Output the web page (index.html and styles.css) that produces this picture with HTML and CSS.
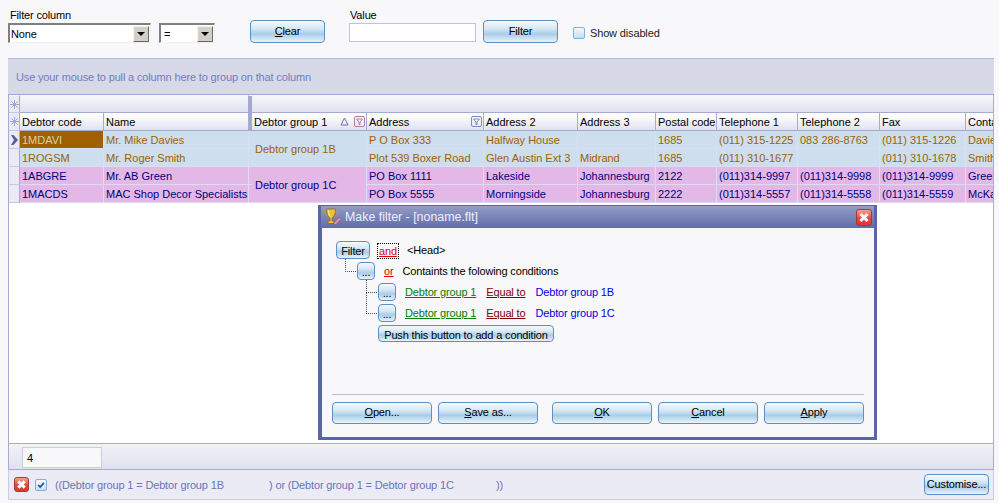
FILE: index.html
```html
<!DOCTYPE html>
<html lang="en">
<head>
    <meta charset="UTF-8">
    <meta name="viewport" content="width=device-width, initial-scale=1.0">
    <title>Debtors</title>
    <link rel="stylesheet" href="styles.css">
</head>
<body>
<div class="page">
    <div class="filter-bar">
        <div class="field field-column">
            <label>Filter column</label>
            <div class="combo combo-column"><span>None</span><i class="combo-arrow"></i></div>
        </div>
        <div class="combo combo-op"><span>=</span><i class="combo-arrow"></i></div>
        <button class="btn btn-clear"><u>C</u>lear</button>
        <div class="field field-value">
            <label>Value</label>
            <div class="value-input"></div>
        </div>
        <button class="btn btn-filter">Filter</button>
        <label class="check-label"><i class="check-box"></i>Show disabled</label>
    </div>

    <div class="group-panel">Use your mouse to pull a column here to group on that column</div>

    <div class="grid-wrap">
        <table class="grid">
            <colgroup>
                <col class="c-ind"><col class="c-code"><col class="c-name"><col class="c-sep">
                <col class="c-group"><col class="c-addr"><col class="c-addr2"><col class="c-addr3">
                <col class="c-postal"><col class="c-tel1"><col class="c-tel2"><col class="c-fax"><col class="c-contact">
            </colgroup>
            <thead>
                <tr class="band-row">
                    <th class="ind"><svg class="star" viewBox="0 0 9 9"><path d="M4.5 0v9M0 4.5h9M1.3 1.3l6.4 6.4M7.7 1.3L1.3 7.7"/></svg></th>
                    <th colspan="2"></th>
                    <th class="sep" rowspan="2"></th>
                    <th colspan="9"></th>
                </tr>
                <tr class="head-row">
                    <th class="ind"><svg class="star" viewBox="0 0 9 9"><path d="M4.5 0v9M0 4.5h9M1.3 1.3l6.4 6.4M7.7 1.3L1.3 7.7"/></svg></th>
                    <th>Debtor code</th>
                    <th>Name</th>
                    <th>
                        <div class="th-inner">Debtor group 1
                            <span class="th-icons">
                                <svg class="sort-icon" viewBox="0 0 9 9"><path d="M4.5 1L8 8H1z"/></svg>
                                <svg class="funnel funnel-on" viewBox="0 0 11 11"><rect x=".5" y=".5" width="10" height="10" rx="1.5"/><path d="M2.5 3h6L6 6v2.5H5V6z"/></svg>
                            </span>
                        </div>
                    </th>
                    <th>
                        <div class="th-inner">Address
                            <span class="th-icons">
                                <svg class="funnel" viewBox="0 0 11 11"><rect x=".5" y=".5" width="10" height="10" rx="1.5"/><path d="M2.5 3h6L6 6v2.5H5V6z"/></svg>
                            </span>
                        </div>
                    </th>
                    <th>Address 2</th>
                    <th>Address 3</th>
                    <th>Postal code</th>
                    <th>Telephone 1</th>
                    <th>Telephone 2</th>
                    <th>Fax</th>
                    <th>Contact</th>
                </tr>
            </thead>
            <tbody>
                <tr class="row-b">
                    <td class="ind"><svg class="cursor" viewBox="0 0 7 10"><path d="M0 0h2.500L7 5l-4.500 5H0l3-5z"/></svg></td>
                    <td class="selected">1MDAVI</td>
                    <td>Mr. Mike Davies</td>
                    <td class="sep"></td>
                    <td rowspan="2" class="group-cell">Debtor group 1B</td>
                    <td>P O Box 333</td>
                    <td>Halfway House</td>
                    <td></td>
                    <td>1685</td>
                    <td>(011) 315-1225</td>
                    <td>083 286-8763</td>
                    <td>(011) 315-1226</td>
                    <td>Davies</td>
                </tr>
                <tr class="row-b">
                    <td class="ind"></td>
                    <td>1ROGSM</td>
                    <td>Mr. Roger Smith</td>
                    <td class="sep"></td>
                    <td>Plot 539 Boxer Road</td>
                    <td>Glen Austin Ext 3</td>
                    <td>Midrand</td>
                    <td>1685</td>
                    <td>(011) 310-1677</td>
                    <td></td>
                    <td>(011) 310-1678</td>
                    <td>Smith</td>
                </tr>
                <tr class="row-c">
                    <td class="ind"></td>
                    <td>1ABGRE</td>
                    <td>Mr. AB Green</td>
                    <td class="sep"></td>
                    <td rowspan="2" class="group-cell">Debtor group 1C</td>
                    <td>PO Box 1111</td>
                    <td>Lakeside</td>
                    <td>Johannesburg</td>
                    <td>2122</td>
                    <td>(011)314-9997</td>
                    <td>(011)314-9998</td>
                    <td>(011)314-9999</td>
                    <td>Green</td>
                </tr>
                <tr class="row-c">
                    <td class="ind"></td>
                    <td>1MACDS</td>
                    <td>MAC Shop Decor Specialists</td>
                    <td class="sep"></td>
                    <td>PO Box 5555</td>
                    <td>Morningside</td>
                    <td>Johannesburg</td>
                    <td>2222</td>
                    <td>(011)314-5557</td>
                    <td>(011)314-5558</td>
                    <td>(011)314-5559</td>
                    <td>McKay</td>
                </tr>
            </tbody>
        </table>
    </div>

    <div class="summary-bar"><div class="summary-cell">4</div></div>

    <div class="filter-summary">
        <i class="close-btn close-small"></i>
        <i class="check-on"><svg viewBox="0 0 12 12"><path d="M2.500 6l2.500 2.500L9.500 3.500"/></svg></i>
        <span class="filter-text filter-a">((Debtor group 1 = Debtor group 1B</span>
        <span class="filter-text filter-b">) or (Debtor group 1 = Debtor group 1C</span>
        <span class="filter-text filter-c">))</span>
        <button class="btn btn-customise">Customise...</button>
    </div>

    <div class="dialog">
        <div class="dialog-title">
            <svg class="trophy" viewBox="0 0 18 18">
                <path class="trophy-handle" d="M4 3H1.500c0 3 1 4.500 3 5M12 3h2.500c0 3-1 4.500-3 5"/>
                <path class="trophy-cup" d="M3.500 1h9c0 5-1.500 8-3.500 9v3h2v2.500H5V13h2v-3C5 9 3.500 6 3.500 1z"/>
                <path class="trophy-shine" d="M5.500 2.500c0 2.500.5 4.500 1.500 6"/>
                <path class="trophy-pencil" d="M10.500 17l.6-2.600 5-5 2 2-5 5z"/>
            </svg>
            <span>Make filter - [noname.flt]</span>
            <i class="close-btn"></i>
        </div>
        <div class="dialog-body">
            <div class="tree">
                <div class="tree-row row-head">
                    <button class="btn btn-tree btn-root">Filter</button>
                    <a class="op-and">and</a>
                    <span>&lt;Head&gt;</span>
                </div>
                <div class="tree-row row-or">
                    <button class="btn btn-tree btn-dots">...</button>
                    <a class="op-or">or</a>
                    <span>Containts the folowing conditions</span>
                </div>
                <div class="tree-row row-cond">
                    <button class="btn btn-tree btn-dots">...</button>
                    <a class="cond-field">Debtor group 1</a>
                    <a class="cond-op">Equal to</a>
                    <a class="cond-value">Debtor group 1B</a>
                </div>
                <div class="tree-row row-cond row-cond-tall">
                    <button class="btn btn-tree btn-dots">...</button>
                    <a class="cond-field">Debtor group 1</a>
                    <a class="cond-op">Equal to</a>
                    <a class="cond-value">Debtor group 1C</a>
                </div>
                <div class="tree-row row-add">
                    <button class="btn btn-tree btn-add">Push this button to add a condition</button>
                </div>
            </div>
            <div class="dialog-buttons">
                <button class="btn btn-dlg"><u>O</u>pen...</button>
                <button class="btn btn-dlg"><u>S</u>ave as...</button>
                <button class="btn btn-dlg btn-ok"><u>O</u>K</button>
                <button class="btn btn-dlg"><u>C</u>ancel</button>
                <button class="btn btn-dlg"><u>A</u>pply</button>
            </div>
        </div>
    </div>
</div>
</body>
</html>
```

FILE: styles.css
```css
* {
    box-sizing: border-box;
}
body {
    margin: 0;
    background-color: #f8f8fb;
    font-family: "Liberation Sans", Arial, sans-serif;
    font-size: 11px;
    letter-spacing: -.15px;
    color: #000;
}
.page {
    position: relative;
    width: 999px;
    height: 503px;
    overflow: hidden;
    display: flex;
    flex-direction: column;
    padding: 0 5px 3px 8px;
}

/* buttons */
.btn {
    display: block;
    padding: 0 0 2px;
    font: inherit;
    letter-spacing: inherit;
    white-space: nowrap;
    color: #000;
    border: 1px solid #5c8fc4;
    border-radius: 4px;
    background: linear-gradient(#f4f9fd 0%, #d9e9f5 35%, #a9cde8 62%, #cfe4f3 85%, #eaf4fb 100%);
    text-align: center;
}

/* top filter row */
.filter-bar {
    height: 58px;
    display: flex;
    align-items: flex-start;
}
.field label {
    display: block;
    height: 13px;
    line-height: 13px;
}
.field-column {
    width: 143px;
    padding-top: 9px;
}
.field-column label {
    margin-left: 2px;
}
.combo {
    height: 20px;
    display: flex;
    align-items: center;
    justify-content: space-between;
    padding: 0 1px 0 1px;
    background-color: #fff;
    border: 2px solid;
    border-color: #808080 #f0f0f0 #f0f0f0 #808080;
    border-width: 2px 1px 1px 2px;
}
.field-column .combo {
    margin-top: 1px;
}
.combo-op {
    width: 56px;
    margin: 23px 35px 0 8px;
    padding-left: 3px;
}
.combo-arrow {
    width: 16px;
    height: 16px;
    background: #d4d0c8;
    border: 1px solid;
    border-color: #f4f4f4 #666 #666 #f4f4f4;
    position: relative;
}
.combo-arrow::after {
    content: "";
    position: absolute;
    left: 3px;
    top: 5px;
    border: 4px solid transparent;
    border-top: 4px solid #000;
    border-bottom: 0;
}
.btn-clear, .btn-filter {
    width: 75px;
    height: 23px;
    margin-top: 20px;
}
.field-value {
    width: 127px;
    margin-left: 24px;
    margin-right: 7px;
    padding-top: 9px;
}
.field-value label {
    margin-left: 1px;
}
.value-input {
    height: 19px;
    margin-top: 1px;
    background-color: #fff;
    border: 1px solid #bfc4da;
}
.check-label {
    display: flex;
    align-items: center;
    margin: 26px 0 0 15px;
    height: 14px;
    color: #222;
}
.check-box {
    width: 12px;
    height: 12px;
    margin-right: 5px;
    border: 1px solid #7fb0dc;
    border-radius: 2px;
    background: linear-gradient(#f2f8fd, #c4dff3);
}

/* group panel */
.group-panel {
    height: 37px;
    line-height: 36px;
    padding-left: 8px;
    background-color: #d7d9e8;
    border-top: 1px solid #b3b9dc;
    border-bottom: 1px solid #9da5d3;
    color: #727cbd;
}

/* grid */
.grid-wrap {
    height: 348px;
    overflow: hidden;
    background-color: #fff;
    border-left: 1px solid #a5abd3;
    border-right: 1px solid #a5abd3;
}
.grid {
    table-layout: fixed;
    width: 1014px;
    border-collapse: separate;
    border-spacing: 0;
    letter-spacing: 0;
}
.c-ind { width: 11px; }
.c-code { width: 84px; }
.c-name { width: 145px; }
.c-sep { width: 3px; }
.c-group { width: 115px; }
.c-addr { width: 117px; }
.c-addr2 { width: 94px; }
.c-addr3 { width: 78px; }
.c-postal { width: 61px; }
.c-tel1 { width: 81px; }
.c-tel2 { width: 82px; }
.c-fax { width: 86px; }
.c-contact { width: 57px; }
.grid th, .grid td {
    padding: 0 0 0 2px;
    overflow: hidden;
    white-space: nowrap;
    font-weight: normal;
    text-align: left;
}
.band-row th {
    height: 18px;
    background: linear-gradient(#f6f6fb, #dfe1ee);
    border-top: 1px solid #f8f8fb;
    border-right: 1px solid #a5abd3;
    border-bottom: 1px solid #a5abd3;
}
.head-row th {
    height: 18px;
    background: linear-gradient(#fdfdfe 20%, #dfe1ee);
    border-right: 1px solid #a5abd3;
    border-bottom: 1px solid #a5abd3;
}
.grid .ind {
    padding: 0;
    background: #e9eaf3;
    border-right: 1px solid #a5abd3;
    border-bottom: 1px solid #c6cae3;
    text-align: center;
    vertical-align: middle;
}
.grid .sep {
    padding: 0;
    border-right: 0;
}
thead .sep {
    background: #a3a9cc;
}
.grid td {
    height: 18px;
    border-right: 1px solid #dcdcf4;
    border-bottom: 1px solid #dcdcf4;
}
.grid td.sep {
    border-right: 0;
}
.row-b td {
    background-color: #cddfee;
    color: #a06000;
}
.row-c td {
    background-color: #e4b8e6;
    color: #000080;
}
.grid td.selected {
    background-color: #a06000;
    color: #d9d0a8;
}
.grid tbody .ind {
    background: #e9eaf3;
}
.grid td.group-cell {
    padding-left: 3px;
}
.star {
    display: block;
    width: 9px;
    height: 9px;
    margin: 0 auto;
    fill: none;
    stroke: #a0a8d8;
    stroke-width: 1;
}
.cursor {
    display: block;
    width: 7px;
    height: 10px;
    margin: 0 auto;
    fill: #565f9e;
}
.th-inner {
    display: flex;
    justify-content: space-between;
    align-items: center;
}
.th-icons {
    display: flex;
    align-items: center;
    gap: 5px;
    margin-right: 1px;
}
.sort-icon {
    width: 9px;
    height: 9px;
    fill: none;
    stroke: #6a73b0;
}
.funnel {
    display: block;
    width: 11px;
    height: 11px;
    fill: none;
    stroke: #7f88c4;
}
.funnel-on {
    stroke: #b57ba6;
}

/* bottom bars */
.summary-bar {
    height: 27px;
    padding: 3px 0 0 13px;
    background: linear-gradient(#f2f3f8, #dfe1ee);
    border: 1px solid #a5abd3;
}
.summary-cell {
    width: 80px;
    height: 21px;
    line-height: 20px;
    padding-left: 4px;
    background-color: #f8f8fb;
    border: 1px solid #c9cde4;
}
.filter-summary {
    height: 30px;
    display: flex;
    align-items: center;
    padding: 0 4px 0 5px;
    background-color: #ebebf5;
    border: 1px solid #c9cde4;
    border-top: 0;
}
.close-btn {
    display: block;
    width: 16px;
    height: 17px;
    position: relative;
    border: 1px solid #a33a33;
    border-radius: 3px;
    background: linear-gradient(#f4a090, #e9473c 55%, #d9382f);
}
.close-btn::before, .close-btn::after {
    content: "";
    position: absolute;
    left: 2px;
    top: 6px;
    width: 10px;
    height: 3px;
    background: #fff;
    transform: rotate(45deg);
}
.close-btn::after {
    transform: rotate(-45deg);
}
.close-small {
    width: 15px;
    height: 15px;
}
.close-small::before, .close-small::after {
    left: 2px;
    top: 5px;
    width: 9px;
}
.check-on {
    display: block;
    width: 12px;
    height: 12px;
    margin-left: 6px;
    background: linear-gradient(#f6fafd, #c8e0f3);
    border: 1px solid #7fb0dc;
    border-radius: 2px;
}
.check-on svg {
    display: block;
    width: 10px;
    height: 10px;
    fill: none;
    stroke: #1d4f9a;
    stroke-width: 2;
}
.filter-text {
    color: #6a74b8;
}
.filter-a {
    width: 214px;
    margin-left: 8px;
}
.filter-b {
    width: 227px;
}
.btn-customise {
    width: 65px;
    height: 21px;
    margin-left: auto;
}

/* make filter dialog */
.dialog {
    position: absolute;
    left: 318px;
    top: 205px;
    width: 559px;
    height: 235px;
    display: flex;
    flex-direction: column;
    background: #5a66a0;
    padding: 1px 3px 3px 4px;
}
.dialog-title {
    height: 22px;
    flex-shrink: 0;
    display: flex;
    align-items: center;
    margin: 0 0 0 -1px;
    padding: 0 1px 0 2px;
    background: linear-gradient(#949dc6, #5f6ca8);
    color: #eef0f8;
    font-size: 12.400px;
    letter-spacing: 0;
}
.dialog-title span {
    margin-left: 4px;
}
.dialog-title .close-btn {
    margin-left: auto;
    margin-right: 1px;
}
.trophy {
    width: 18px;
    height: 18px;
}
.trophy-cup {
    fill: #f0bd3c;
    stroke: #8a6414;
    stroke-width: .7;
}
.trophy-handle {
    fill: none;
    stroke: #c9981f;
}
.trophy-shine {
    fill: none;
    stroke: #fff3bd;
}
.trophy-pencil {
    fill: #e58fb0;
    stroke: #7a4a60;
    stroke-width: .6;
}
.dialog-body {
    flex: 1;
    background-color: #f8f8fb;
    display: flex;
    flex-direction: column;
    padding: 13px 10px 14px 10px;
}
.tree {
    flex: 1;
}
.tree-row {
    position: relative;
    display: flex;
    align-items: flex-start;
    height: 21px;
    line-height: 18px;
    color: #000;
}
.btn-tree {
    height: 18px;
}
.btn-root {
    width: 34px;
    margin-left: 4px;
    padding-bottom: 3px;
}
.op-and {
    margin: 2px 0 0 7px;
    padding: 0 1px;
    height: 16px;
    line-height: 15px;
    width: 22px;
    border: 1px dotted #000;
    color: #e00000;
    text-decoration: underline;
}
.row-head span {
    margin-left: 8px;
}
.row-or {
    padding-left: 25px;
}
.btn-dots {
    width: 18px;
}
.op-or {
    margin-left: 9px;
    margin-right: 9px;
    color: #e00000;
    text-decoration: underline;
}
.row-or::before, .row-cond::before {
    content: "";
    position: absolute;
    left: 13px;
    top: -3px;
    width: 10px;
    height: 12px;
    border-left: 1px dotted #555;
    border-bottom: 1px dotted #555;
}
.row-cond {
    padding-left: 46px;
}
.row-cond::before {
    left: 34px;
    top: -3px;
    height: 12px;
}
.row-cond-tall::before {
    top: -12px;
    height: 21px;
}
.cond-field {
    margin-left: 9px;
    color: #008000;
    text-decoration: underline;
}
.cond-op {
    margin-left: 10px;
    color: #800000;
    text-decoration: underline;
}
.cond-value {
    margin-left: 10px;
    color: #0000e0;
}
.row-add {
    padding-left: 46px;
}
.btn-add {
    width: 176px;
    height: 17px;
    padding-bottom: 4px;
}
.dialog-buttons {
    display: flex;
    height: 29px;
    padding-top: 7px;
    border-top: 1px solid #b8bed9;
    gap: 6px;
}
.btn-dlg {
    width: 100px;
    height: 22px;
}
.btn-ok {
    margin-left: 8px;
    width: 100px;
}
```
